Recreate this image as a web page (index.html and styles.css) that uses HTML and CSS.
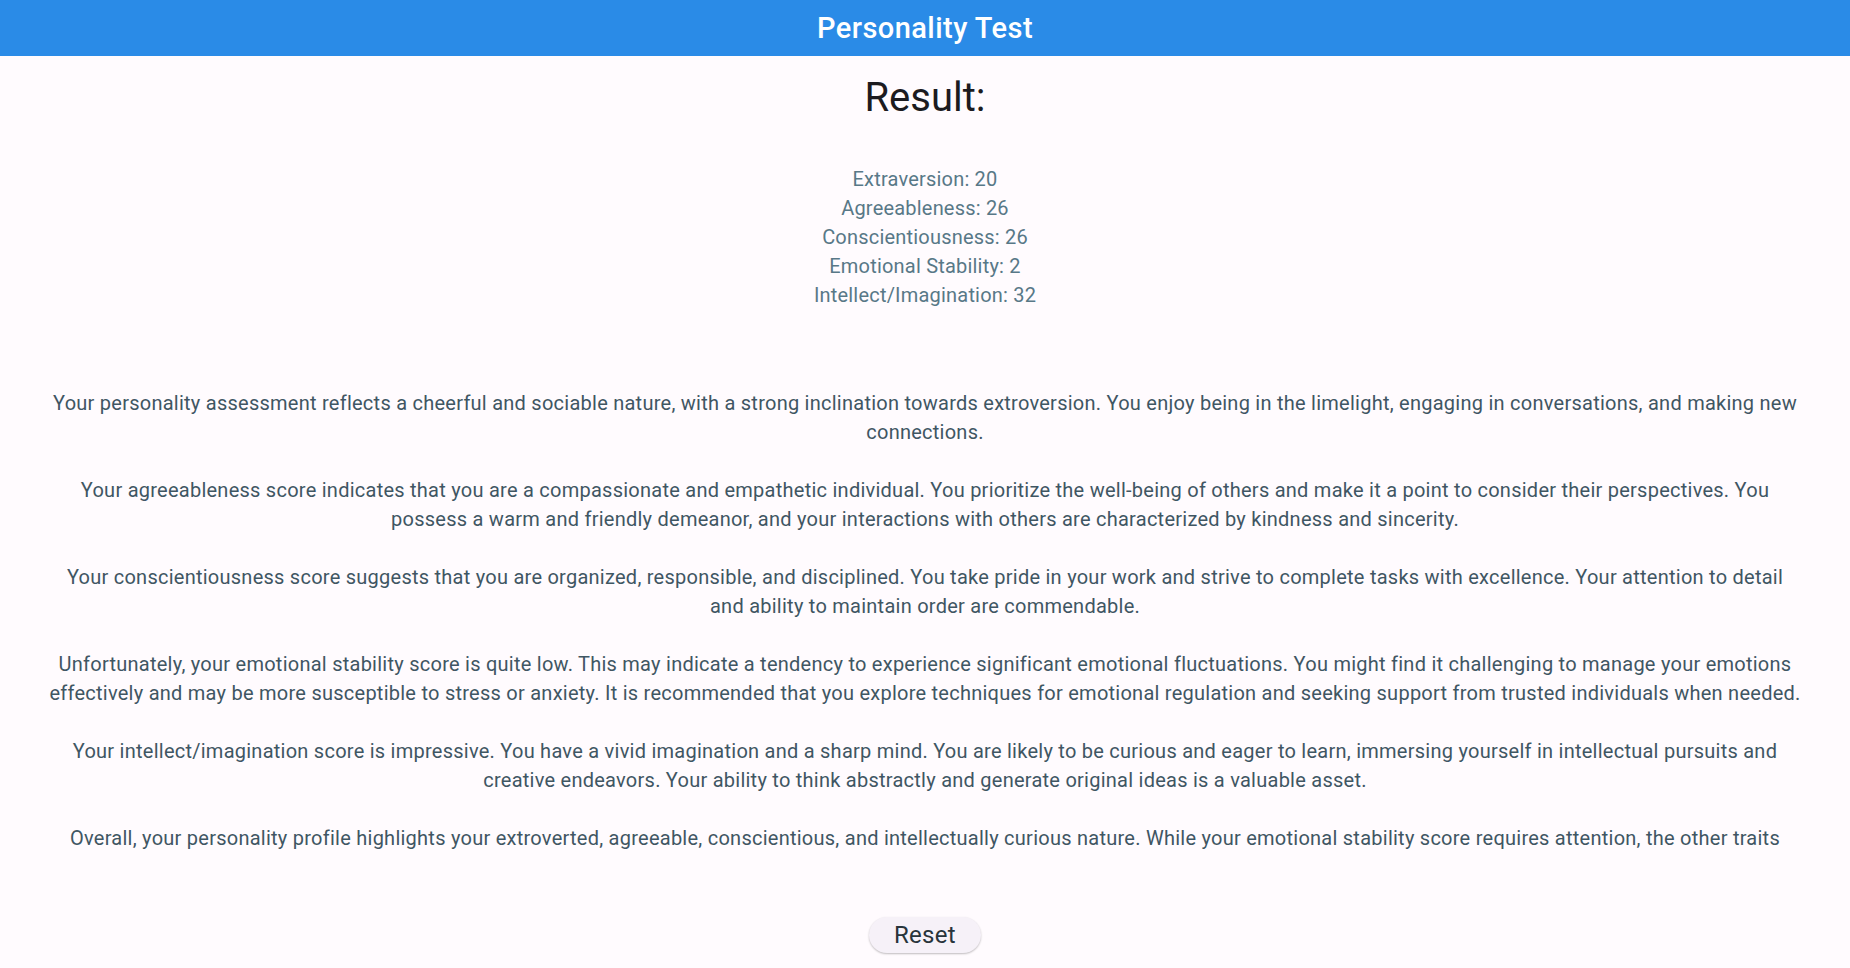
FILE: index.html
```html
<!DOCTYPE html>
<html lang="en">
<head>
<meta charset="utf-8">
<title>Personality Test</title>
<link rel="stylesheet" href="styles.css">
</head>
<body>
<header class="app-bar">
  <h1 class="app-title">Personality Test</h1>
</header>
<main class="page">
  <h2 class="result-title">Result:</h2>
  <ul class="scores">
    <li>Extraversion: 20</li>
    <li>Agreeableness: 26</li>
    <li>Conscientiousness: 26</li>
    <li>Emotional Stability: 2</li>
    <li>Intellect/Imagination: 32</li>
  </ul>
  <section class="summary">
    <p>Your personality assessment reflects a cheerful and sociable nature, with a strong inclination towards extroversion. You enjoy being in the limelight, engaging in conversations, and making new connections.</p>
    <p>Your agreeableness score indicates that you are a compassionate and empathetic individual. You prioritize the well-being of others and make it a point to consider their perspectives. You possess a warm and friendly demeanor, and your interactions with others are characterized by kindness and sincerity.</p>
    <p>Your conscientiousness score suggests that you are organized, responsible, and disciplined. You take pride in your work and strive to complete tasks with excellence. Your attention to detail and ability to maintain order are commendable.</p>
    <p>Unfortunately, your emotional stability score is quite low. This may indicate a tendency to experience significant emotional fluctuations. You might find it challenging to manage your emotions effectively and may be more susceptible to stress or anxiety. It is recommended that you explore techniques for emotional regulation and seeking support from trusted individuals when needed.</p>
    <p>Your intellect/imagination score is impressive. You have a vivid imagination and a sharp mind. You are likely to be curious and eager to learn, immersing yourself in intellectual pursuits and creative endeavors. Your ability to think abstractly and generate original ideas is a valuable asset.</p>
    <p>Overall, your personality profile highlights your extroverted, agreeable, conscientious, and intellectually curious nature. While your emotional stability score requires attention, the other traits indicate a well-rounded and engaging personality with much to offer.</p>
  </section>
  <div class="actions">
    <button class="reset-btn" type="button">Reset</button>
  </div>
</main>
</body>
</html>
```
FILE: styles.css
```css
* { box-sizing: border-box; }

html, body {
  margin: 0;
  padding: 0;
  height: 100%;
}

body {
  background: #fffbfe;
  font-family: Roboto, "Liberation Sans", sans-serif;
  display: flex;
  flex-direction: column;
  height: 968px;
  overflow: hidden;
}

.app-bar {
  height: 56px;
  flex: none;
  background: #2a8be7;
  display: flex;
  align-items: center;
  justify-content: center;
}

.app-title {
  margin: 0;
  color: #ffffff;
  font-size: 29px;
  font-weight: 500;
  letter-spacing: 0.45px;
  line-height: 34px;
}

.page {
  flex: 1;
  min-height: 0;
  display: flex;
  flex-direction: column;
  align-items: stretch;
  padding: 18px 48.5px 15px;
}

.result-title {
  margin: 0;
  text-align: center;
  font-size: 40px;
  font-weight: 400;
  line-height: 47px;
  color: #1c1b1f;
}

.scores {
  list-style: none;
  margin: 44px 0 0;
  padding: 0;
  text-align: center;
  font-size: 20px;
  line-height: 29px;
  letter-spacing: 0.2px;
  color: #587887;
}

.summary {
  flex: 1;
  min-height: 0;
  overflow: hidden;
  margin-top: 79px;
  text-align: center;
  font-size: 20px;
  line-height: 29px;
  letter-spacing: 0.25px;
  color: #3f5663;
}

.summary p {
  margin: 0 0 29px;
}

.actions {
  flex: none;
  display: flex;
  justify-content: center;
  padding-top: 61px;
}

.reset-btn {
  height: 36px;
  width: 112px;
  border: none;
  border-radius: 18px;
  background: #f6f1f8;
  box-shadow: 0 1px 2px rgba(0, 0, 0, 0.25);
  font-family: Roboto, "Liberation Sans", sans-serif;
  font-size: 24px;
  letter-spacing: 0.3px;
  line-height: 36px;
  color: #28343b;
  padding: 0;
  cursor: pointer;
}
```
